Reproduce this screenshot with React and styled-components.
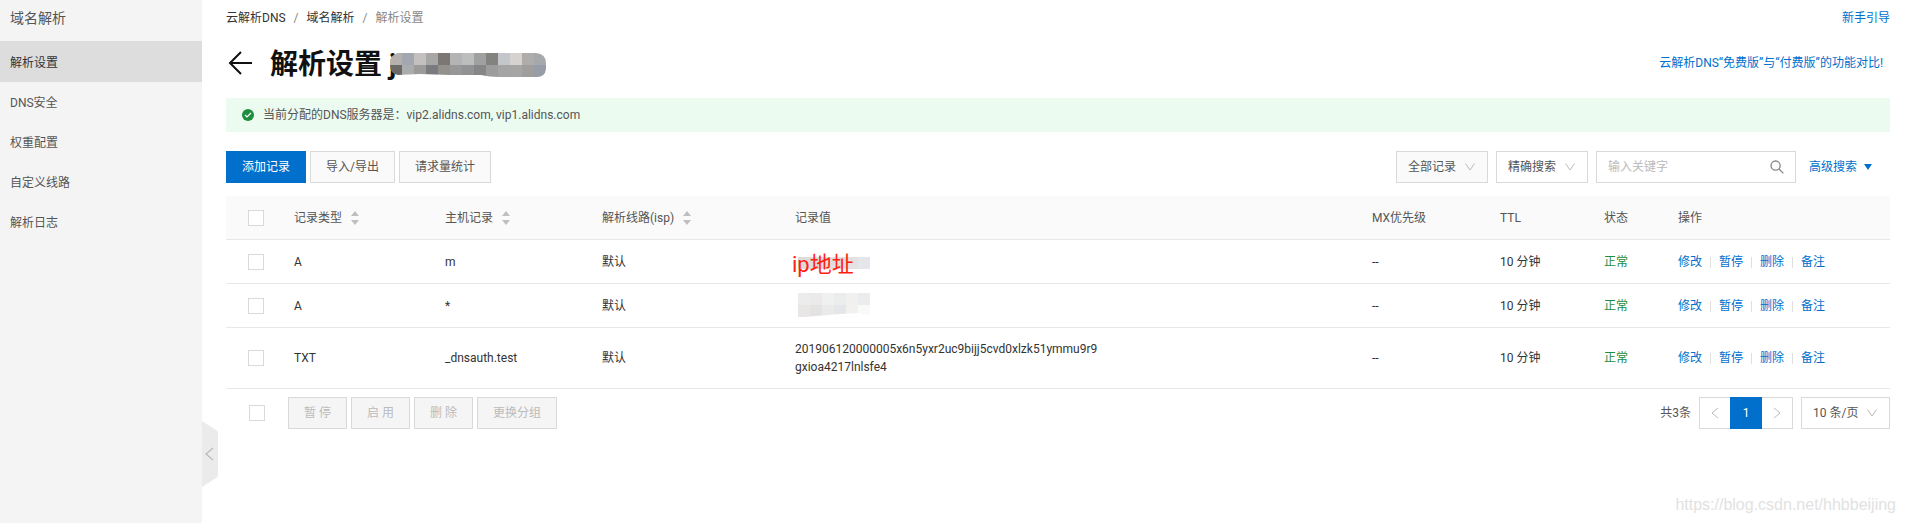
import React, { useState } from 'react'
import styled, { createGlobalStyle } from 'styled-components'

const menu = ['解析设置', 'DNS安全', '权重配置', '自定义线路', '解析日志']

const records = [
  { id: 1, type: 'A', host: 'm', line: '默认', value: 'masked-note', mx: '--', ttl: '10 分钟', status: '正常' },
  { id: 2, type: 'A', host: '*', line: '默认', value: 'masked', mx: '--', ttl: '10 分钟', status: '正常' },
  {
    id: 3,
    type: 'TXT',
    host: '_dnsauth.test',
    line: '默认',
    value: '201906120000005x6n5yxr2uc9bijj5cvd0xlzk51ymmu9r9gxioa4217lnlsfe4',
    mx: '--',
    ttl: '10 分钟',
    status: '正常',
  },
]

const actions = ['修改', '暂停', '删除', '备注']

const domainCells = [
  ['#b3b0ae', '#a3a8b0', '#c4c0c0', '#a7a7a7', '#7c7772', '#b4b4b4', '#bcbebd', '#a0a0a0', '#82827f', '#c5c6cc', '#d6d2d0', '#aeadab', '#a5a9ab'],
  ['#6b6968', '#abacae', '#9d9a9a', '#797b7e', '#94918c', '#979797', '#909294', '#868686', '#9c9c9c', '#a4a4a4', '#a5a5a5', '#a09e9c', '#979ca6'],
]

const noteCells = [['#dcdcdb', '#dcdcda', '#dededd', '#e3e1df', '#e2e2e0', '#e4e6ea']]

const valueCells = [
  ['#ececec', '#ebe9e9', '#eff1f0', '#ebedec', '#f2f0ef', '#ebecee'],
  ['#e9e7e6', '#e4e2e3', '#e9eae9', '#e4e6e9', '#f2f1ef', '#f8f9f9'],
]

function Cells({ rows }) {
  return rows.map((row, y) =>
    row.map((color, x) => <rect key={`${x}-${y}`} x={x * 12} y={y * 12} width="12" height="12" fill={color} />)
  )
}

function Chevron({ dir = 'down' }) {
  const paths = {
    down: 'M1.5 2.5L6 9l4.5-6.5',
    left: 'M9 1L3 6l6 5',
    right: 'M3 1l6 5-6 5',
  }
  return (
    <svg width="12" height="12" viewBox="0 0 12 12" fill="none" stroke="currentColor" strokeWidth="1" aria-hidden="true">
      <path d={paths[dir]} />
    </svg>
  )
}

function SortIcon() {
  return (
    <svg width="8" height="14" viewBox="0 0 8 14" fill="#bfbfbf" aria-hidden="true">
      <path d="M4 0l4 5H0zM4 14l4-5H0z" />
    </svg>
  )
}

function RecordValue({ value }) {
  if (value === 'masked-note') {
    return (
      <Masked>
        <svg width="72" height="12" aria-hidden="true"><Cells rows={noteCells} /></svg>
        <Note>ip地址</Note>
      </Masked>
    )
  }
  if (value === 'masked') {
    return (
      <Masked $tall>
        <svg width="72" height="24" aria-hidden="true">
          <clipPath id="value-edge"><path d="M0 0h72v22l-12-2-18 1-24 2-12 1H0z" /></clipPath>
          <g clipPath="url(#value-edge)"><Cells rows={valueCells} /></g>
        </svg>
      </Masked>
    )
  }
  return <Value>{value}</Value>
}

function App() {
  const [selected, setSelected] = useState([])
  const allSelected = selected.length === records.length

  const toggle = (id) => {
    setSelected(selected.includes(id) ? selected.filter((s) => s !== id) : [...selected, id])
  }
  const toggleAll = () => {
    setSelected(allSelected ? [] : records.map((r) => r.id))
  }

  return (
    <>
      <GlobalStyle />
      <Layout>
        <Sidebar>
          <SideTitle>域名解析</SideTitle>
          <nav>
            {menu.map((item, i) => (
              <SideLink key={item} href="#" $active={i === 0}>{item}</SideLink>
            ))}
          </nav>
          <Collapse type="button" aria-label="收起菜单">
            <svg width="16" height="66" viewBox="0 0 16 66" aria-hidden="true">
              <path d="M0 0l14 9q2 1 2 3v42q0 2-2 3L0 66z" fill="#ebebeb" />
              <path d="M11 27l-7 6 7 6" fill="none" stroke="#bbb" strokeWidth="1.3" />
            </svg>
          </Collapse>
        </Sidebar>

        <Main>
          <TopRow>
            <Breadcrumb aria-label="breadcrumb">
              <a href="#">云解析DNS</a>
              <i>/</i>
              <a href="#">域名解析</a>
              <i>/</i>
              <span>解析设置</span>
            </Breadcrumb>
            <Link href="#">新手引导</Link>
          </TopRow>

          <TitleRow>
            <Back type="button" aria-label="返回">
              <svg width="24" height="24" viewBox="0 0 24 24" fill="none" stroke="#111" strokeWidth="2" aria-hidden="true">
                <path d="M13 1L2 12l11 11M2 12h22" />
              </svg>
            </Back>
            <Title>
              解析设置{' '}
              <Domain>
                j
                <svg width="156" height="24" aria-hidden="true">
                  <clipPath id="domain-edge">
                    <path d="M8 0h138q10 1 10 10v6q-1 8-9 8h-38q-10 0-18-2H60l-30-1-22 1Q0 21 0 12 0 1 8 0z" />
                  </clipPath>
                  <g clipPath="url(#domain-edge)"><Cells rows={domainCells} /></g>
                </svg>
              </Domain>
            </Title>
            <Compare href="#">云解析DNS“免费版”与“付费版”的功能对比!</Compare>
          </TitleRow>

          <Notice>
            <svg width="12" height="12" viewBox="0 0 12 12" aria-hidden="true">
              <circle cx="6" cy="6" r="6" fill="#1e8e3e" />
              <path d="M3 6l2 2 4-4" fill="none" stroke="#fff" strokeWidth="1.2" />
            </svg>
            当前分配的DNS服务器是：vip2.alidns.com, vip1.alidns.com
          </Notice>

          <Toolbar>
            <Group>
              <Button type="button" $primary>添加记录</Button>
              <Button type="button">导入/导出</Button>
              <Button type="button">请求量统计</Button>
            </Group>
            <Filters>
              <SelectBox $grey>
                <select aria-label="记录范围"><option>全部记录</option></select>
                <Chevron />
              </SelectBox>
              <SelectBox>
                <select aria-label="搜索方式"><option>精确搜索</option></select>
                <Chevron />
              </SelectBox>
              <Search>
                <input type="text" placeholder="输入关键字" aria-label="输入关键字" />
                <svg width="14" height="14" viewBox="0 0 14 14" fill="none" stroke="#888" strokeWidth="1.3" aria-hidden="true">
                  <circle cx="5.6" cy="5.6" r="4.6" />
                  <path d="M9 9l4.4 4.4" />
                </svg>
              </Search>
              <Advanced type="button">
                高级搜索
                <svg width="8" height="6" viewBox="0 0 8 6" fill="currentColor" aria-hidden="true">
                  <path d="M0 0h8L4 6z" />
                </svg>
              </Advanced>
            </Filters>
          </Toolbar>

          <Table>
            <colgroup>
              <col width="52" />
              <col width="151" />
              <col width="157" />
              <col width="193" />
              <col />
              <col width="128" />
              <col width="104" />
              <col width="74" />
              <col width="228" />
            </colgroup>
            <thead>
              <tr>
                <CheckHead>
                  <Checkbox aria-label="全选" checked={allSelected} onChange={toggleAll} />
                </CheckHead>
                <th><Sortable type="button">记录类型<SortIcon /></Sortable></th>
                <th><Sortable type="button">主机记录<SortIcon /></Sortable></th>
                <th><Sortable type="button">解析线路(isp)<SortIcon /></Sortable></th>
                <th>记录值</th>
                <th>MX优先级</th>
                <th>TTL</th>
                <th>状态</th>
                <th>操作</th>
              </tr>
            </thead>
            <tbody>
              {records.map((r) => (
                <tr key={r.id}>
                  <CheckCell>
                    <Checkbox aria-label={`选择 ${r.host}`} checked={selected.includes(r.id)} onChange={() => toggle(r.id)} />
                  </CheckCell>
                  <td>{r.type}</td>
                  <td>{r.host}</td>
                  <td>{r.line}</td>
                  <td><RecordValue value={r.value} /></td>
                  <td>{r.mx}</td>
                  <td>{r.ttl}</td>
                  <td><Status>{r.status}</Status></td>
                  <td>
                    <Actions>
                      {actions.map((a) => <Link key={a} href="#">{a}</Link>)}
                    </Actions>
                  </td>
                </tr>
              ))}
            </tbody>
          </Table>

          <Footer>
            <Checkbox aria-label="全选本页" checked={allSelected} onChange={toggleAll} />
            <Group>
              <Button type="button" disabled>暂 停</Button>
              <Button type="button" disabled>启 用</Button>
              <Button type="button" disabled>删 除</Button>
              <Button type="button" disabled>更换分组</Button>
            </Group>
            <Pagination>
              <span>共3条</span>
              <Pages>
                <PageButton type="button" aria-label="上一页"><Chevron dir="left" /></PageButton>
                <PageButton type="button" $current>1</PageButton>
                <PageButton type="button" aria-label="下一页"><Chevron dir="right" /></PageButton>
              </Pages>
              <SelectBox $small>
                <select aria-label="每页条数"><option>10 条/页</option></select>
                <Chevron />
              </SelectBox>
            </Pagination>
          </Footer>
        </Main>
        <Watermark>https://blog.csdn.net/hhbbeijing</Watermark>
      </Layout>
    </>
  )
}

export default App

const GlobalStyle = createGlobalStyle`
  * {
    box-sizing: border-box;
  }
  body {
    margin: 0;
    background: #fff;
    color: #333;
    font-family: Roboto, "Noto Sans CJK SC", sans-serif;
    font-size: 12px;
    line-height: 18px;
  }
  button, input, select {
    font: inherit;
    color: inherit;
  }
  button {
    cursor: pointer;
  }
  a {
    color: inherit;
    text-decoration: none;
  }
  svg {
    display: block;
    flex: none;
  }
`

const Layout = styled.div`
  position: relative;
  display: flex;
  min-height: 100vh;
`

const Sidebar = styled.aside`
  position: relative;
  flex: none;
  width: 202px;
  background: #f4f4f4;
`

const SideTitle = styled.div`
  padding: 6px 10px 11px;
  font-size: 14px;
  line-height: 24px;
  color: #555;
`

const SideLink = styled.a`
  display: block;
  padding: ${(p) => (p.$active ? 3 : 2)}px 10px 0;
  line-height: 38px;
  color: ${(p) => (p.$active ? '#333' : '#555')};
  background: ${(p) => (p.$active ? '#ddd' : 'transparent')};
`

const Collapse = styled.button`
  position: absolute;
  left: 100%;
  bottom: 36px;
  padding: 0;
  border: 0;
  background: none;
`

const Main = styled.main`
  flex: 1;
  min-width: 0;
  padding: 9px 15px 0 24px;
`

const TopRow = styled.div`
  display: flex;
  justify-content: space-between;
`

const Breadcrumb = styled.nav`
  display: flex;
  gap: 8px;
  i {
    font-style: normal;
    color: #888;
  }
  span {
    color: #888;
  }
`

const Link = styled.a`
  color: #0070cc;
`

const TitleRow = styled.div`
  display: flex;
  align-items: center;
  margin-top: 16px;
  height: 40px;
`

const Back = styled.button`
  margin-right: 18px;
  padding: 0 0 0 2px;
  border: 0;
  background: none;
`

const Title = styled.h1`
  margin: 0;
  padding-top: 4px;
  font-size: 28px;
  line-height: 40px;
  font-weight: 700;
  color: #111;
`

const Domain = styled.span`
  position: relative;
  svg {
    position: absolute;
    left: 1px;
    bottom: 4px;
  }
`

const Compare = styled(Link)`
  margin-left: auto;
  padding-right: 7px;
`

const Notice = styled.div`
  display: flex;
  align-items: center;
  gap: 9px;
  margin-top: 15px;
  padding: 8px 16px;
  background: #ebfbf0;
  color: #555;
`

const Toolbar = styled.div`
  display: flex;
  justify-content: space-between;
  margin: 19px 0 13px;
`

const Group = styled.div`
  display: flex;
  gap: 4px;
`

const Button = styled.button`
  height: 32px;
  padding: 0 15px;
  border: 1px solid ${(p) => (p.$primary ? '#0070cc' : '#d9d9d9')};
  background: ${(p) => (p.$primary ? '#0070cc' : '#fafafa')};
  color: ${(p) => (p.$primary ? '#fff' : '#555')};
  &:disabled {
    background: #f5f5f5;
    color: #bbb;
    cursor: not-allowed;
  }
`

const Filters = styled.div`
  display: flex;
  gap: 8px;
`

const SelectBox = styled.label`
  position: relative;
  width: ${(p) => (p.$small ? 89 : 92)}px;
  height: 32px;
  border: 1px solid #d9d9d9;
  background: ${(p) => (p.$grey ? '#fafafa' : '#fff')};
  color: #bbb;
  select {
    appearance: none;
    width: 100%;
    height: 30px;
    padding: 0 28px 0 11px;
    border: 0;
    background: transparent;
    color: #555;
  }
  svg {
    position: absolute;
    right: 11px;
    top: 9px;
    pointer-events: none;
  }
`

const Search = styled.label`
  display: flex;
  align-items: center;
  width: 200px;
  height: 32px;
  padding: 0 11px;
  border: 1px solid #d9d9d9;
  input {
    flex: 1;
    min-width: 0;
    padding: 0;
    border: 0;
    outline: 0;
    background: none;
  }
  input::placeholder {
    color: #bbb;
  }
`

const Advanced = styled.button`
  display: flex;
  align-items: center;
  gap: 7px;
  padding: 0 18px 0 5px;
  border: 0;
  background: none;
  color: #0070cc;
`

const Table = styled.table`
  width: 100%;
  table-layout: fixed;
  border-collapse: separate;
  border-spacing: 0;
  th, td {
    height: 44px;
    padding: 12px 16px;
    border-bottom: 1px solid #e6e8ea;
    text-align: left;
  }
  th {
    padding: 0 16px;
    background: #fafafa;
    color: #555;
    font-weight: 400;
  }
`

const CheckHead = styled.th`
  &&& {
    padding: 0 0 0 22px;
  }
`

const CheckCell = styled.td`
  &&& {
    padding: 0 0 0 22px;
  }
`

const Checkbox = styled.input.attrs({ type: 'checkbox' })`
  appearance: none;
  display: block;
  flex: none;
  width: 16px;
  height: 16px;
  margin: 0;
  border: 1px solid #d9d9d9;
  background: #fff;
  &:checked {
    border-color: #0070cc;
    background: #0070cc;
  }
`

const Sortable = styled.button`
  display: flex;
  align-items: center;
  gap: 9px;
  padding: 0;
  border: 0;
  background: none;
`

const Masked = styled.div`
  position: relative;
  height: 18px;
  svg {
    position: absolute;
    left: 3px;
    top: ${(p) => (p.$tall ? -4 : 4)}px;
  }
`

const Note = styled.span`
  position: absolute;
  left: -3px;
  top: 0;
  font-size: 22px;
  line-height: 24px;
  color: #ff2010;
`

const Value = styled.div`
  max-width: 306px;
  word-break: break-all;
`

const Status = styled.span`
  color: #1e8e3e;
`

const Actions = styled.div`
  display: flex;
  align-items: center;
  a + a {
    position: relative;
    margin-left: 17px;
  }
  a + a::before {
    content: '';
    position: absolute;
    left: -9px;
    top: 4px;
    height: 11px;
    border-left: 1px solid #e0e0e0;
  }
`

const Footer = styled.div`
  display: flex;
  align-items: center;
  padding: 8px 0 8px 23px;
  ${Group} {
    margin-left: 23px;
  }
`

const Pagination = styled.div`
  display: flex;
  align-items: center;
  gap: 8px;
  margin-left: auto;
  color: #555;
`

const Pages = styled.div`
  display: flex;
`

const PageButton = styled.button`
  display: flex;
  align-items: center;
  justify-content: center;
  width: ${(p) => (p.$current ? 32 : 31)}px;
  height: 32px;
  padding: 0;
  border: 1px solid ${(p) => (p.$current ? '#0070cc' : '#d9d9d9')};
  background: ${(p) => (p.$current ? '#0070cc' : '#fff')};
  color: ${(p) => (p.$current ? '#fff' : '#bbb')};
  &:first-child {
    border-right: 0;
  }
  &:last-child {
    border-left: 0;
  }
`

const Watermark = styled.div`
  position: absolute;
  right: 9px;
  bottom: 8px;
  font-family: "Liberation Sans", sans-serif;
  font-size: 16px;
  line-height: 20px;
  color: #e2e2e2;
  pointer-events: none;
`
